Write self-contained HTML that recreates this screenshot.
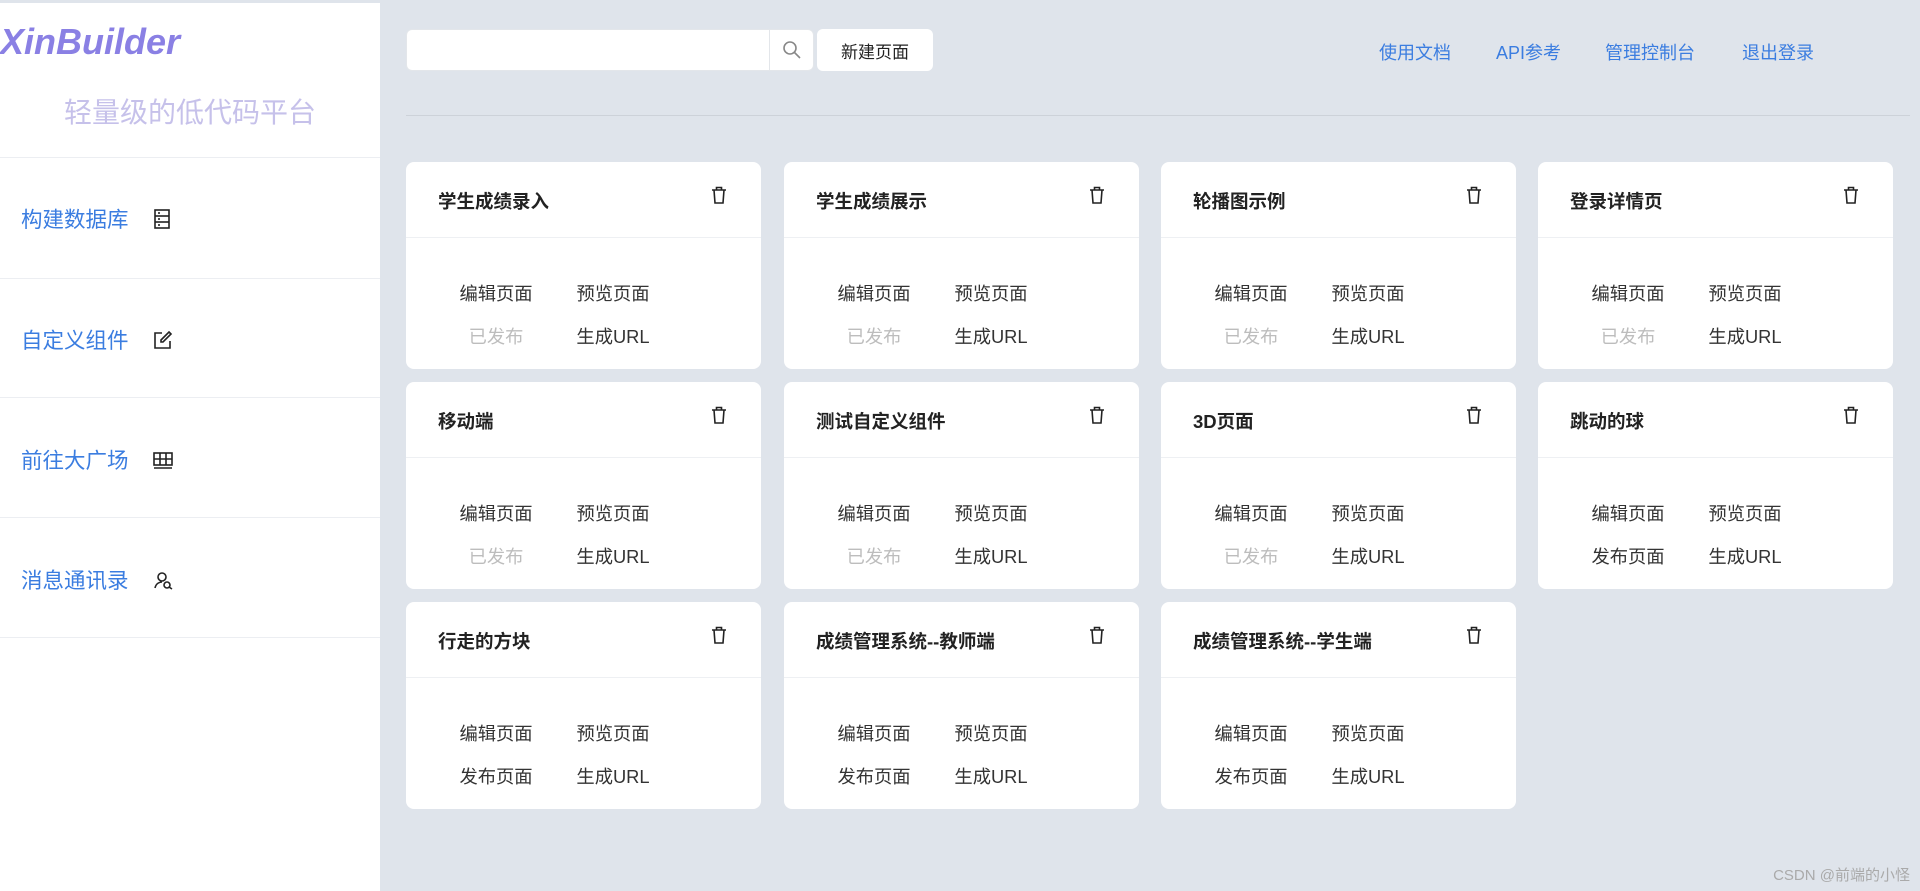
<!DOCTYPE html>
<html><head><meta charset="utf-8"><style>
*{margin:0;padding:0;box-sizing:border-box}
body{width:1920px;height:891px;overflow:hidden;background:#dfe4eb;font-family:"Liberation Sans","Noto Sans CJK SC",sans-serif;position:relative}
.side{position:absolute;left:0;top:3px;width:380px;height:888px;background:#fff}
.logo{position:absolute;left:0;top:18px;font-size:36px;font-weight:bold;font-style:italic;color:#8a80e4}
.sub{position:absolute;left:0;width:380px;top:88px;text-align:center;font-size:28px;color:#c6c1ea}
.line{position:absolute;left:0;width:380px;height:1px;background:#eceef2}
.nav{position:absolute;left:21px;font-size:21.5px;color:#3b7de0;display:flex;align-items:center}
.nav svg{margin-left:24px}
.abs{position:absolute}
.search{left:406px;top:29px;width:408px;height:42px;background:#fff;border-radius:6px;border:1px solid #e3e6ea}
.search .btn{position:absolute;right:0;top:0;width:44px;height:40px;border-left:1px solid #e3e6ea;display:flex;align-items:center;justify-content:center}
.newb{left:817px;top:29px;width:116px;height:42px;background:#fff;border-radius:6px;font-size:17px;color:#222;display:flex;align-items:center;justify-content:center}
.top{top:39px;font-size:18px;color:#3b7de0}
.hr{left:406px;top:115px;width:1504px;height:1px;background:#cdd2d9}
.card{position:absolute;width:355px;height:207px;background:#fff;border-radius:8px}
.card .t{position:absolute;left:32px;top:26px;font-size:18.5px;font-weight:bold;color:#222}
.card .hd{position:absolute;left:0;right:0;top:75px;height:1px;background:#eef0f3}
.card svg{position:absolute;left:305px;top:24px}
.card .a{position:absolute;width:80px;text-align:center;font-size:18.3px;color:#333}
.c1{left:50px}.c2{left:167px}
.r1{top:118px}.r2{top:161px}
.dis{color:#bdbdbd!important}
.wm{right:10px;bottom:6px;font-size:15px;color:#aaa}
</style></head><body>
<div class="side">
<div class="logo">XinBuilder</div>
<div class="sub">轻量级的低代码平台</div>
<div class="line" style="top:154px"></div>
<div class="line" style="top:275px"></div>
<div class="line" style="top:394px"></div>
<div class="line" style="top:514px"></div>
<div class="line" style="top:634px"></div>
<div class="nav" style="top:200px">构建数据库<svg width="18" height="20" viewBox="0 0 18 20" fill="none" stroke="#222" stroke-width="1.6"><rect x="2" y="1" width="14" height="18"/><line x1="2" y1="7" x2="16" y2="7"/><line x1="2" y1="13" x2="16" y2="13"/><line x1="5" y1="4" x2="7" y2="4"/><line x1="5" y1="10" x2="7" y2="10"/><line x1="5" y1="16" x2="7" y2="16"/></svg></div>
<div class="nav" style="top:321px">自定义组件<svg width="20" height="20" viewBox="0 0 20 20" fill="none" stroke="#222" stroke-width="1.6"><path d="M9 3H2v15h15v-7"/><path d="M16 2l2 2-8 8H8v-2z"/></svg></div>
<div class="nav" style="top:441px">前往大广场<svg width="20" height="18" viewBox="0 0 20 18" fill="none" stroke="#222" stroke-width="1.6"><rect x="1" y="2" width="18" height="12"/><line x1="1" y1="8" x2="19" y2="8"/><line x1="7" y1="2" x2="7" y2="14"/><line x1="13" y1="2" x2="13" y2="14"/><line x1="1" y1="17" x2="19" y2="17"/></svg></div>
<div class="nav" style="top:561px">消息通讯录<svg width="20" height="20" viewBox="0 0 20 20" fill="none" stroke="#222" stroke-width="1.6"><circle cx="9" cy="7" r="4"/><path d="M2 18c1-5 5-6 7-6"/><circle cx="14" cy="15" r="3"/><line x1="16" y1="17" x2="19" y2="19"/></svg></div>
</div>
<div class="abs search"><div class="btn"><svg width="20" height="20" viewBox="0 0 20 20" fill="none" stroke="#888" stroke-width="1.6"><circle cx="8" cy="8" r="6"/><line x1="12.5" y1="12.5" x2="18" y2="18"/></svg></div></div>
<div class="abs newb">新建页面</div>
<div class="abs top" style="left:1379px">使用文档</div>
<div class="abs top" style="left:1496px">API参考</div>
<div class="abs top" style="left:1605px">管理控制台</div>
<div class="abs top" style="left:1742px">退出登录</div>
<div class="abs hr"></div>

<div id="cards"></div>
<script>
var d=[["学生成绩录入",1],["学生成绩展示",1],["轮播图示例",1],["登录详情页",1],["移动端",1],["测试自定义组件",1],["3D页面",1],["跳动的球",0],["行走的方块",0],["成绩管理系统--教师端",0],["成绩管理系统--学生端",0]];
var xs=[406,784,1161,1538],ys=[162,382,602],h="";
var tr='<svg width="16" height="18" viewBox="0 0 16 18" fill="none" stroke="#222" stroke-width="1.6"><path d="M1 4h14M5.5 4V1.5h5V4M3 4l1 13h8l1-13"/></svg>';
d.forEach(function(c,i){h+='<div class="card" style="left:'+xs[i%4]+'px;top:'+ys[Math.floor(i/4)]+'px"><div class="t">'+c[0]+'</div>'+tr+'<div class="hd"></div><div class="a c1 r1">编辑页面</div><div class="a c2 r1">预览页面</div><div class="a c1 r2'+(c[1]?' dis">已发布':'">发布页面')+'</div><div class="a c2 r2">生成URL</div></div>';});
document.getElementById("cards").innerHTML=h;
</script>
<div class="abs wm">CSDN @前端的小怪</div>
</body></html>
